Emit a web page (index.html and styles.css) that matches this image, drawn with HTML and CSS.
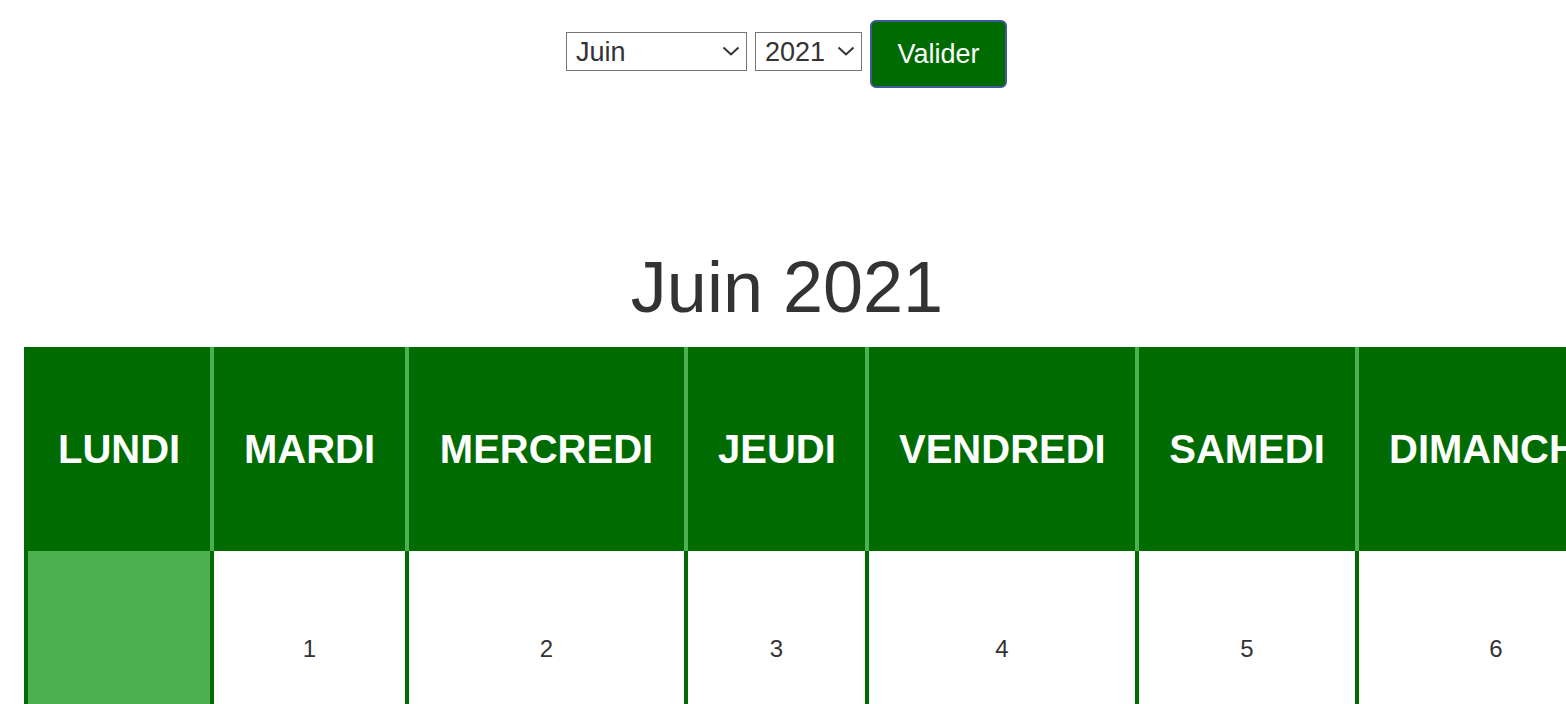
FILE: index.html
```html
<!DOCTYPE html>
<html lang="fr">
<head>
<meta charset="utf-8">
<title>Calendrier</title>
<link rel="stylesheet" href="styles.css">
</head>
<body>
<div class="page">
  <form class="picker">
    <span class="selwrap">
      <select class="sel sel-month">
        <option>Janvier</option><option>Février</option><option>Mars</option><option>Avril</option>
        <option>Mai</option><option selected>Juin</option><option>Juillet</option><option>Août</option>
        <option>Septembre</option><option>Octobre</option><option>Novembre</option><option>Décembre</option>
      </select>
      <svg class="chev" width="18" height="10" viewBox="0 0 18 10"><path d="M1.5 1.5 L9 8.5 L16.5 1.5" fill="none" stroke="#333" stroke-width="2"/></svg>
    </span>
    <span class="selwrap">
      <select class="sel sel-year">
        <option>2019</option><option>2020</option><option selected>2021</option><option>2022</option>
      </select>
      <svg class="chev" width="18" height="10" viewBox="0 0 18 10"><path d="M1.5 1.5 L9 8.5 L16.5 1.5" fill="none" stroke="#333" stroke-width="2"/></svg>
    </span>
    <button type="button" class="btn">Valider</button>
  </form>
  <h1 class="title">Juin 2021</h1>
  <table class="cal">
    <colgroup>
      <col class="c-lun"><col class="c-mar"><col class="c-mer"><col class="c-jeu"><col class="c-ven"><col class="c-sam"><col class="c-dim">
    </colgroup>
    <thead>
      <tr>
        <th class="first">LUNDI</th><th>MARDI</th><th>MERCREDI</th><th>JEUDI</th><th>VENDREDI</th><th>SAMEDI</th><th>DIMANCHE</th>
      </tr>
    </thead>
    <tbody>
      <tr>
        <td class="empty"></td><td>1</td><td>2</td><td>3</td><td>4</td><td>5</td><td>6</td>
      </tr>
    </tbody>
  </table>
</div>
</body>
</html>
```
FILE: styles.css
```css
body {
  margin: 0;
  font-family: "Liberation Sans", Arial, sans-serif;
  color: #333;
  background: #fff;
}
.page {
  overflow: hidden;
  padding-top: 20px;
}
.picker {
  display: flex;
  justify-content: center;
  align-items: flex-start;
  gap: 8px;
  margin: 0;
  padding-left: 7px;
}
.selwrap {
  position: relative;
  display: block;
  margin-top: 12px;
}
.sel {
  display: block;
  box-sizing: border-box;
  height: 39px;
  font-family: "Liberation Sans", Arial, sans-serif;
  font-size: 27px;
  color: #333;
  background: #fff;
  border: 1px solid #767676;
  border-radius: 0;
  padding: 0 30px 0 9px;
  -webkit-appearance: none;
  appearance: none;
}
.sel-month {
  width: 181px;
}
.sel-year {
  width: 107px;
}
.chev {
  position: absolute;
  right: 7px;
  top: 14px;
  pointer-events: none;
}
.btn {
  box-sizing: border-box;
  height: 68px;
  width: 137px;
  padding: 0;
  font-family: "Liberation Sans", Arial, sans-serif;
  font-size: 27px;
  color: #fff;
  background: #006b00;
  border: 2px solid #3f5a9c;
  border-radius: 6px;
}
.title {
  margin: 158px 0 19px;
  padding-left: 8px;
  font-size: 72px;
  line-height: 82px;
  font-weight: normal;
  text-align: center;
  color: #333;
}
.cal {
  margin-left: 24px;
  width: 1609px;
  table-layout: fixed;
  border-collapse: separate;
  border-spacing: 0;
}
.c-lun { width: 186px; }
.c-mar { width: 195px; }
.c-mer { width: 279px; }
.c-jeu { width: 181px; }
.c-ven { width: 270px; }
.c-sam { width: 220px; }
.c-dim { width: 278px; }
.cal th {
  box-sizing: border-box;
  height: 204px;
  padding: 0 30px;
  background: #006b00;
  color: #fff;
  font-size: 40px;
  font-weight: bold;
  text-align: center;
  vertical-align: middle;
  white-space: nowrap;
  border-left: 4px solid #4caf50;
}
.cal th.first {
  border-left-color: #006b00;
}
.cal td {
  box-sizing: border-box;
  height: 196px;
  padding: 0;
  border-left: 4px solid #006b00;
  font-size: 24px;
  color: #333;
  text-align: center;
  vertical-align: middle;
}
.cal td.empty {
  background: #4caf50;
}
```
